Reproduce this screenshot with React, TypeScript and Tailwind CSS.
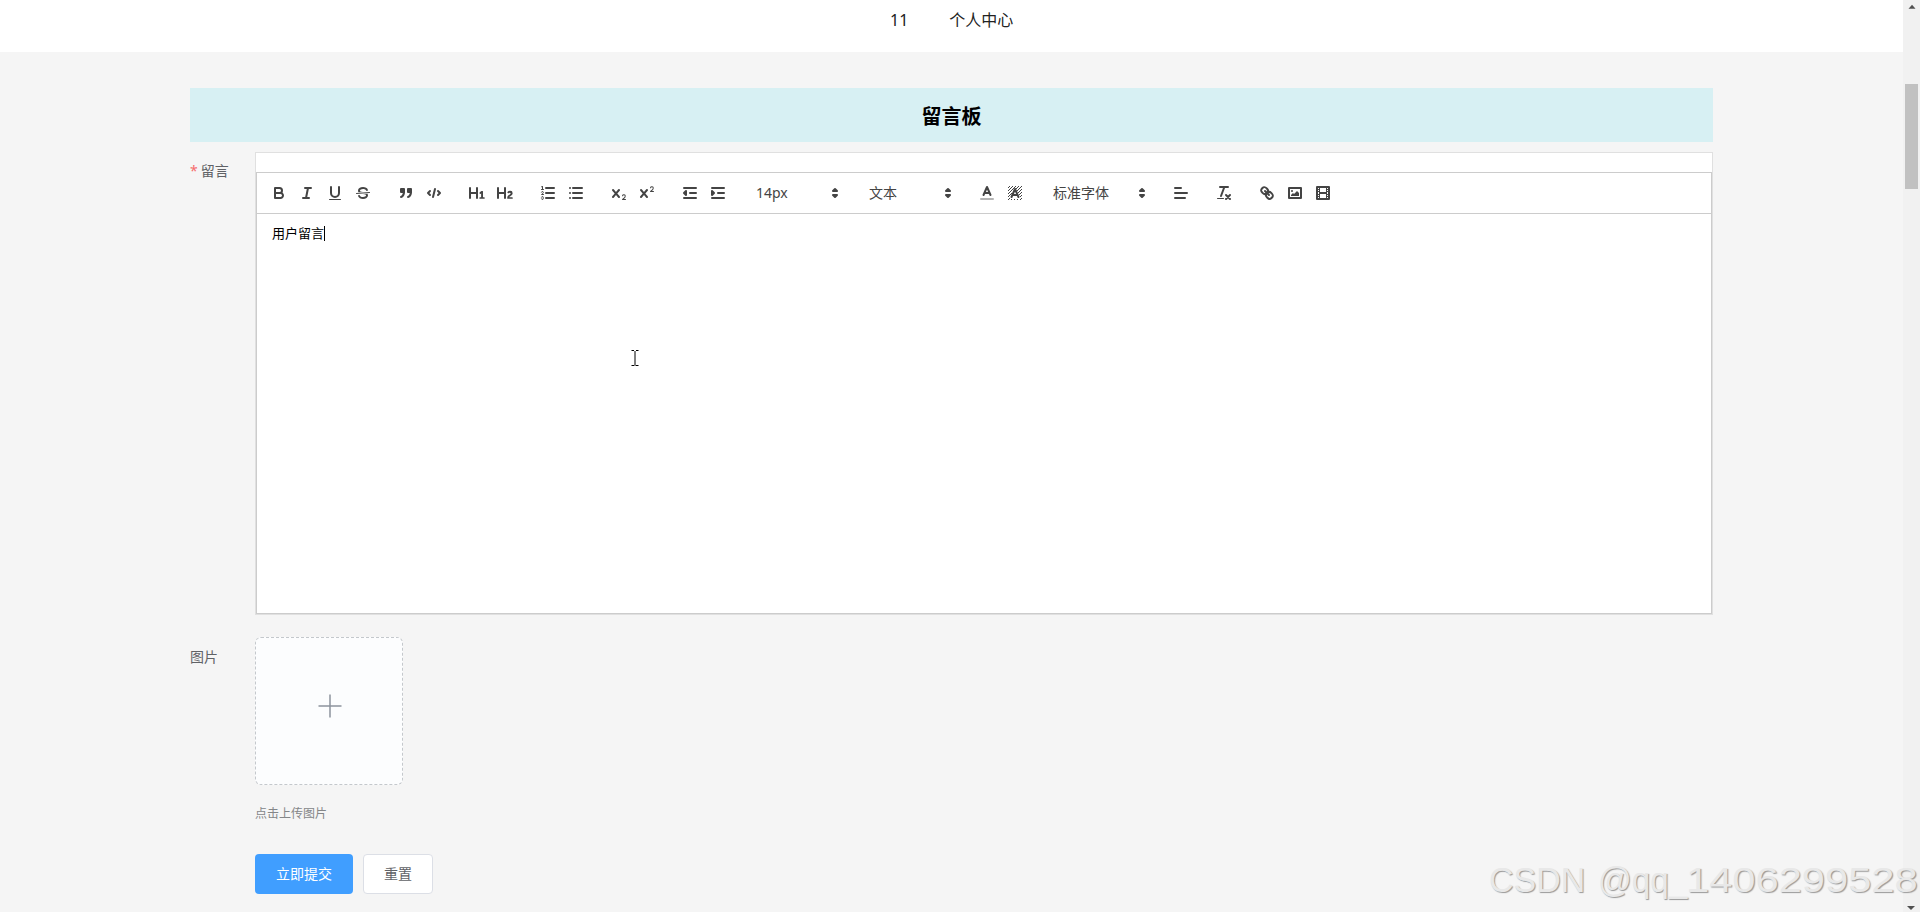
import React from "react";

const S = "fill-none stroke-[#444] stroke-2 [stroke-linecap:round] [stroke-linejoin:round]";
const T = "fill-none stroke-[#444] stroke-1 [stroke-linecap:round] [stroke-linejoin:round]";
const F = "fill-[#444]";
const FS = "fill-[#444] stroke-[#444] stroke-2 [stroke-linecap:round] [stroke-linejoin:round]";

const X_MARK =
  "M9.65,5.241a1,1,0,0,0-1.409.108L6,7.964,3.759,5.349A1,1,0,0,0,2.192,6.59178Q2.21541,6.6213,2.241,6.649L4.684,9.5,2.241,12.35A1,1,0,0,0,3.71,13.70722q0.02557-.02768.049-0.05722L6,11.036,8.241,13.65a1,1,0,1,0,1.567-1.24277Q9.78459,12.3777,9.759,12.35L7.316,9.5,9.759,6.651A1,1,0,0,0,9.65,5.241Z";

/* Diagonal hatching behind the letter of the background-colour icon. */
const dither: [number, number][] = [];
for (let y = 2; y < 16; y++) {
  for (let x = 2; x < 16; x++) {
    if ((x + y) % 3 === 2 && !(y > 3 && y < 15 && Math.abs(x + 0.5 - 9) < (y - 1) * 0.42)) dither.push([x, y]);
  }
}

const icons: Record<string, React.ReactNode> = {
  bold: (
    <>
      <path className={S} d="M5,4H9.5A2.5,2.5,0,0,1,12,6.5v0A2.5,2.5,0,0,1,9.5,9H5V4Z" />
      <path className={S} d="M5,9h5.5A2.5,2.5,0,0,1,13,11.5v0A2.5,2.5,0,0,1,10.5,14H5V9Z" />
    </>
  ),
  italic: <path className={S} d="M7,4H13M5,14H11M8,14L10,4" />,
  underline: (
    <>
      <path className={S} d="M5,3V9a4.012,4.012,0,0,0,4,4H9a4.012,4.012,0,0,0,4-4V3" />
      <rect className={F} height="1" rx="0.5" width="12" x="3" y="15" />
    </>
  ),
  strike: (
    <>
      <path className={T} d="M15.5,8.5L2.5,9.5" />
      <path className={F} d="M9.007,8C6.542,7.791,6,7.519,6,6.5,6,5.792,7.283,5,9,5c1.571,0,2.765.679,2.969,1.309a1,1,0,0,0,1.9-.617C13.356,4.106,11.354,3,9,3,6.2,3,4,4.538,4,6.5a3.2,3.2,0,0,0,.5,1.843Z" />
      <path className={F} d="M8.984,10C11.457,10.208,12,10.479,12,11.5c0,0.708-1.283,1.5-3,1.5-1.571,0-2.765-.679-2.969-1.309a1,1,0,1,0-1.9.617C4.644,13.894,6.646,15,9,15c2.8,0,5-1.538,5-3.5a3.2,3.2,0,0,0-.5-1.843Z" />
    </>
  ),
  quote: (
    <>
      <rect className={FS} height="3" width="3" x="4" y="5" />
      <rect className={FS} height="3" width="3" x="11" y="5" />
      <path className={FS} d="M7,8c0,4.031-3,5-3,5" />
      <path className={FS} d="M14,8c0,4.031-3,5-3,5" />
    </>
  ),
  code: <path className={S} d="M5,7L3,9L5,11M13,7L15,9L13,11M10,5L8,13" />,
  h1: (
    <path className={F} d="M10,4V14a1,1,0,0,1-2,0V10H3v4a1,1,0,0,1-2,0V4A1,1,0,0,1,3,4V8H8V4a1,1,0,0,1,2,0Zm6.06787,9.209H14.98975V7.59863a.54085.54085,0,0,0-.605-.60547h-.62744a1.01119,1.01119,0,0,0-.748.29688L11.645,8.56641a.5435.5435,0,0,0-.022.8584l.28613.30762a.53861.53861,0,0,0,.84717.0332l.09912-.08789a1.2137,1.2137,0,0,0,.2417-.35254h.02246s-.01123.30859-.01123.60547V13.209H12.041a.54085.54085,0,0,0-.605.60547v.43945a.54085.54085,0,0,0,.605.60547h4.02686a.54085.54085,0,0,0,.605-.60547v-.43945A.54085.54085,0,0,0,16.06787,13.209Z" />
  ),
  h2: (
    <path className={F} d="M16.73975,13.81445v.43945a.54085.54085,0,0,1-.605.60547H11.855a.58392.58392,0,0,1-.64893-.60547V14.0127c0-2.90527,3.39941-3.42187,3.39941-4.55469a.77675.77675,0,0,0-.84717-.78125,1.17684,1.17684,0,0,0-.83594.38477c-.2749.26367-.561.374-.85791.13184l-.4292-.34082c-.30811-.24219-.38525-.51758-.1543-.81445a2.97155,2.97155,0,0,1,2.45361-1.17676,2.45393,2.45393,0,0,1,2.68408,2.40918c0,2.45312-3.1792,2.92676-3.27832,3.93848h2.79443A.54085.54085,0,0,1,16.73975,13.81445ZM9,3A.99974.99974,0,0,0,8,4V8H3V4A1,1,0,0,0,1,4V14a1,1,0,0,0,2,0V10H8v4a1,1,0,0,0,2,0V4A.99974.99974,0,0,0,9,3Z" />
  ),
  ordered: (
    <>
      <path className={S} d="M7,4H15M7,9H15M7,14H15" />
      <path className={T} d="M2.5,5.5H4.5" />
      <path className={F} d="M3.5,6A0.5,0.5,0,0,1,3,5.5V3.085l-0.276.138A0.5,0.5,0,0,1,2.053,3c-0.124-.247-0.023-0.324.224-0.447l1-.5A0.5,0.5,0,0,1,4,2.5v3A0.5,0.5,0,0,1,3.5,6Z" />
      <path className={T} d="M4.5,10.5h-2c0-.234,1.85-1.076,1.85-2.234A0.959,0.959,0,0,0,2.5,8.156" />
      <path className={T} d="M2.5,14.846a0.959,0.959,0,0,0,1.85-.109A0.7,0.7,0,0,0,3.75,14a0.688,0.688,0,0,0,.6-0.736,0.959,0.959,0,0,0-1.85-.109" />
    </>
  ),
  bullet: <path className={S} d="M6,4H15M6,9H15M6,14H15M3,4H3M3,9H3M3,14H3" />,
  sub: (
    <>
      <path className={F} d="M15.5,15H13.861a3.858,3.858,0,0,0,1.914-2.975,1.8,1.8,0,0,0-1.6-1.751A1.921,1.921,0,0,0,12.021,11.7a0.50013,0.50013,0,1,0,.957.291h0a0.914,0.914,0,0,1,1.053-.725,0.81,0.81,0,0,1,.744.762c0,1.076-1.16971,1.86982-1.93971,2.43082A1.45639,1.45639,0,0,0,12,15.5a0.5,0.5,0,0,0,.5.5h3A0.5,0.5,0,0,0,15.5,15Z" />
      <path className={F} d={X_MARK} />
    </>
  ),
  sup: (
    <>
      <path className={F} d="M15.5,7H13.861a4.015,4.015,0,0,0,1.914-2.975,1.8,1.8,0,0,0-1.6-1.751A1.922,1.922,0,0,0,12.021,3.7a0.5,0.5,0,1,0,.957.291,0.917,0.917,0,0,1,1.053-.725,0.81,0.81,0,0,1,.744.762c0,1.077-1.164,1.925-1.934,2.486A1.423,1.423,0,0,0,12,7.5a0.5,0.5,0,0,0,.5.5h3A0.5,0.5,0,0,0,15.5,7Z" />
      <path className={F} d={X_MARK} />
    </>
  ),
  outdent: (
    <>
      <path className={S} d="M3,14H15M3,4H15M9,9H15" />
      <path className={FS} d="M5,7V11L3,9Z" />
    </>
  ),
  indent: (
    <>
      <path className={S} d="M3,14H15M3,4H15M9,9H15" />
      <path className={FS} d="M3,7V11L5,9Z" />
    </>
  ),
  color: (
    <>
      <path className={`${S} opacity-40`} d="M3,15H15" />
      <path className={S} d="M5.5,11L9,3L12.5,11M11.63,9H6.38" />
    </>
  ),
  background: (
    <>
      {dither.map(([x, y]) => (
        <rect key={`${x}-${y}`} className={F} x={x} y={y} width="1" height="1" />
      ))}
      <path className={S} d="M5.5,13L9,5L12.5,13M11.63,11H6.38" />
    </>
  ),
  align: <path className={S} d="M3,9H15M3,14H13M3,4H9" />,
  clean: (
    <>
      <path className={S} d="M5,3H13M6,12L9.35,3M11,11L15,15M15,11L11,15" />
      <rect className={F} height="1" rx="0.5" width="7" x="2" y="14" />
    </>
  ),
  link: (
    <>
      <path className={S} d="M7,7L11,11" />
      <path className={S} d="M8.9,4.577a3.476,3.476,0,0,1,.36,4.679A3.476,3.476,0,0,1,4.577,8.9C3.185,7.5,2.035,6.4,4.217,4.217S7.5,3.185,8.9,4.577Z" />
      <path className={S} d="M13.423,9.1a3.476,3.476,0,0,0-4.679-.36,3.476,3.476,0,0,0,.36,4.679c1.392,1.392,2.5,2.542,4.679.36S14.815,10.5,13.423,9.1Z" />
    </>
  ),
  image: (
    <>
      <rect className={S} height="10" width="12" x="3" y="4" />
      <circle className={F} cx="6" cy="7" r="1" />
      <path className={F} d="M5,12V11L7,9L8,10L11,7L13,9V12Z" />
    </>
  ),
  video: (
    <>
      <rect className={S} height="12" width="12" x="3" y="3" />
      <path className={F} d="M5,3h1v12h-1zM12,3h1v12h-1zM5,8h8v2h-8zM3,5h3v1h-3zM3,7h3v1h-3zM3,10h3v1h-3zM3,12h3v1h-3zM12,5h3v1h-3zM12,7h3v1h-3zM12,10h3v1h-3zM12,12h3v1h-3z" />
    </>
  ),
};

function Group({ names }: { names: string[] }) {
  return (
    <div className="mr-[15px] flex">
      {names.map((n) => (
        <button key={n} className="h-6 w-7 px-[5px] py-[3px]">
          <svg viewBox="0 0 18 18" className="size-[18px]">
            {icons[n]}
          </svg>
        </button>
      ))}
    </div>
  );
}

function Picker({ label, wide }: { label: string; wide?: boolean }) {
  return (
    <div className={`mr-[15px] flex h-6 items-center justify-between pr-px pl-[9px] text-[14px] text-[#444] ${wide ? "w-[108px]" : "w-[98px]"}`}>
      <span className="leading-6">{label}</span>
      <svg viewBox="0 0 18 18" className="size-[18px]">
        <path className={FS} d="M7,11L9,13L11,11ZM7,7L9,5L11,7Z" />
      </svg>
    </div>
  );
}

export default function App() {
  return (
    <div className="relative flex h-[912px] w-[1920px] overflow-hidden bg-[#f5f5f5] font-['Noto_Sans','Noto_Sans_CJK_SC',sans-serif] text-[14px] text-[#606266]">
      <div className="flex w-[1903px] flex-col">
        <header className="flex h-[52px] gap-[41px] bg-white pt-2 pl-[890px] text-[16px] leading-6 text-[#222]">
          <span>11</span>
          <span>个人中心</span>
        </header>
        <main className="mt-9 ml-[190px] w-[1523px]">
          <h1 className="flex h-[54px] items-center justify-center bg-[#d7f0f3] pt-1 text-[20px] font-bold text-black">留言板</h1>

          <div className="mt-[10px] flex">
            <label className="w-[65px] pt-[9px] leading-5">
              <span className="mr-[3px] text-[#f56c6c]">*</span>留言
            </label>
            <div className="h-[463px] w-[1458px] border border-[#e0e0e0] bg-white pt-[19px]">
              <div className="flex h-[42px] w-[1456px] items-start border border-[#ccc] p-2">
                <Group names={["bold", "italic", "underline", "strike"]} />
                <Group names={["quote", "code"]} />
                <Group names={["h1", "h2"]} />
                <Group names={["ordered", "bullet"]} />
                <Group names={["sub", "sup"]} />
                <Group names={["outdent", "indent"]} />
                <Picker label="14px" />
                <Picker label="文本" />
                <Group names={["color", "background"]} />
                <Picker label="标准字体" wide />
                <Group names={["align"]} />
                <Group names={["clean"]} />
                <Group names={["link", "image", "video"]} />
              </div>
              <div className="flex h-[400px] w-[1456px] items-start border border-t-0 border-[#ccc] px-[15px] pt-3 text-[13px] text-black">
                <span className="border-r border-black leading-[15px]">用户留言</span>
              </div>
            </div>
          </div>

          <div className="mt-[22px] flex">
            <label className="w-[65px] pt-[10px] leading-5">图片</label>
            <div>
              <div className="flex size-[148px] items-center justify-center rounded-md border border-dashed border-[#c4c8cc] bg-[#fcfdfe]">
                <svg viewBox="0 0 24 24" className="mt-[-11px] ml-px size-6">
                  <path className="fill-none stroke-[#8c939d] stroke-[1.5]" d="M12,0.5V23.5M0.5,12H23.5" />
                </svg>
              </div>
              <p className="mt-[20px] text-[12px] leading-[18px] text-[#848688]">点击上传图片</p>
              <div className="mt-[31px] flex gap-[10px] leading-5">
                <button className="h-10 w-[98px] rounded bg-[#409eff] text-white">立即提交</button>
                <button className="h-10 w-[70px] rounded border border-[#dcdfe6] bg-white">重置</button>
              </div>
            </div>
          </div>
        </main>
      </div>

      <div className="flex w-[17px] flex-col items-center bg-[#f1f1f1]">
        <svg viewBox="0 0 16 16" className="size-[14px]">
          <path fill="#505050" d="M4,10L8,5.5L12,10Z" />
        </svg>
        <div className="mt-[70px] mr-px h-[105px] w-[13px] bg-[#c1c1c1]" />
        <svg viewBox="0 0 16 16" className="mt-auto mr-px size-4">
          <path fill="#505050" d="M4,10L8,14L12,10Z" />
        </svg>
      </div>

      <svg viewBox="0 0 8 17" className="absolute top-[350px] left-[631px] h-[17px] w-2">
        <path className="fill-none stroke-black" d="M0.5,0.5H3M5,0.5H7.5M4,1V16M0.5,15.5H3M5,15.5H7.5" />
      </svg>
      <div className="absolute bottom-[12px] left-[1489px] flex font-['Liberation_Sans',sans-serif] text-[35px] leading-10 whitespace-nowrap text-[#e8e8e8] [text-shadow:1px_1px_1px_#999]">
        <span className="w-[109px] origin-left scale-x-[0.97]">CSDN </span>
        <span className="w-[88px] origin-left scale-x-[0.95]">@qq_</span>
        <span className="w-[232px] origin-left scale-x-[1.19]">1406299528</span>
      </div>
    </div>
  );
}
